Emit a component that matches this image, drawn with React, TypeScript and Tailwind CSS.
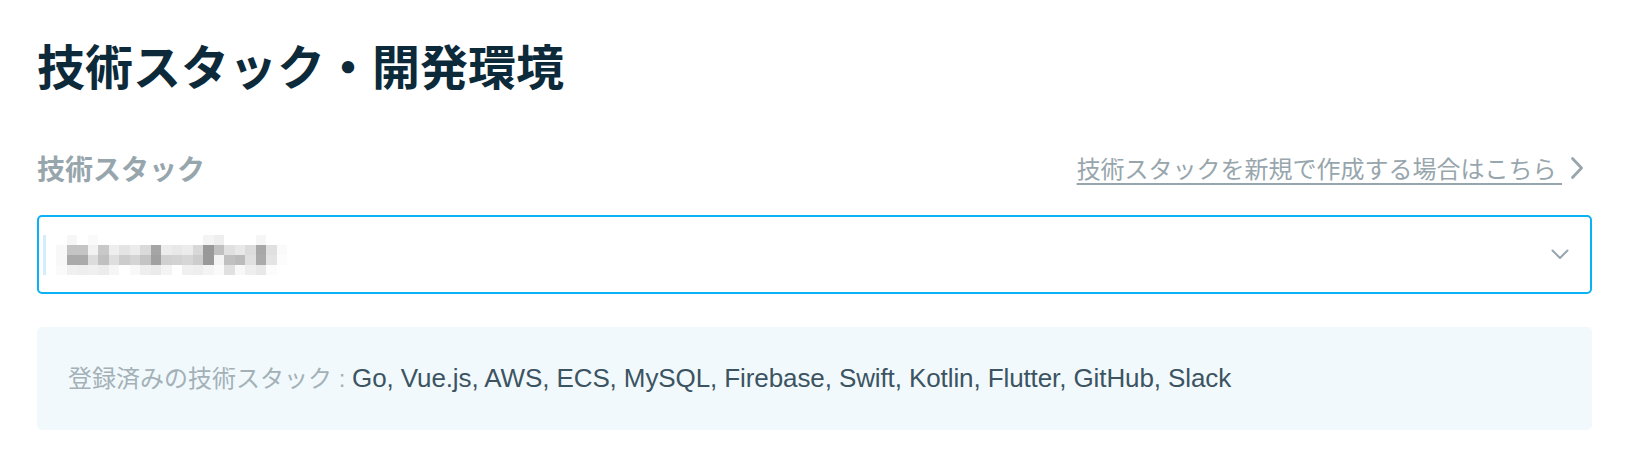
import React from 'react';

const FONT = { fontFamily: '"Liberation Sans", "Noto Sans CJK JP", sans-serif' };

// mosaic that hides the selected value (rows of 11px blocks, greys sampled from the picture)
const MOSAIC: string[][] = [
  ['#fff', '#f6f6f6', '#fff', '#fafafa', '#fff', '#fff', '#fff', '#fff', '#fff', '#fff', '#fff', '#fff', '#fff', '#fff', '#f4f4f4', '#eeeeee', '#fff', '#fff', '#fff', '#f6f6f6', '#fff', '#fff'],
  ['#f8f8f8', '#c4c4c4', '#c4c4c4', '#f2f2f2', '#c8c8c8', '#eeeeee', '#e4e4e4', '#ececec', '#dadada', '#a5a5a5', '#ececec', '#e8e8e8', '#ececec', '#d8d8d8', '#999999', '#c0c0c0', '#e0e0e0', '#e8e8e8', '#dcdcdc', '#a8a8a8', '#e0e0e0', '#fafafa'],
  ['#f8f8f8', '#aaaaaa', '#aaaaaa', '#dcdcdc', '#c0c0c0', '#dedede', '#cccccc', '#d4d4d4', '#c4c4c4', '#a0a0a0', '#d0d0d0', '#d2d2d2', '#d6d6d6', '#cccccc', '#999999', '#f4f4f4', '#c0c0c0', '#bbbbbb', '#e0e0e0', '#aaaaaa', '#e4e4e4', '#fcfcfc'],
  ['#fafafa', '#f0f0f0', '#eeeeee', '#f0f0f0', '#ececec', '#f6f6f6', '#fff', '#f8f8f8', '#eeeeee', '#eaeaea', '#f4f4f4', '#fff', '#f0f0f0', '#eeeeee', '#f4f4f4', '#fafafa', '#e0e0e0', '#f8f8f8', '#eeeeee', '#e8e8e8', '#fcfcfc', '#fff'],
];

const stacks = ['Go', 'Vue.js', 'AWS', 'ECS', 'MySQL', 'Firebase', 'Swift', 'Kotlin', 'Flutter', 'GitHub', 'Slack'];

const Mosaic: React.FC = () => (
  <div className="flex flex-col">
    {MOSAIC.map((row, r) => (
      <div key={r} className="flex">
        {row.map((c, i) => (
          <div key={i} className="h-[10px] w-[10.5px]" style={{ backgroundColor: c }} />
        ))}
      </div>
    ))}
  </div>
);

export default function App() {
  return (
    <div className="min-h-[462px] bg-white pl-[37px] pr-[52px] pt-[28px]" style={FONT}>
      <h1 className="text-[48px] font-bold leading-[72px] text-[#0c2a3a]" style={{ fontFamily: '"Noto Sans CJK JP", sans-serif' }}>
        技術スタック・開発環境
      </h1>

      <div className="mt-[48px] flex h-[40px] items-center justify-between">
        <span className="text-[28px] font-bold text-[#97a6ad]" style={{ fontFamily: '"Noto Sans CJK JP", sans-serif' }}>
          技術スタック
        </span>
        <a href="#" className="mr-[8px] flex items-center gap-[8px] text-[#97a6ad]">
          <span className="text-[24px] underline underline-offset-[5px] decoration-[1.5px]" style={{ fontFamily: '"Noto Sans CJK JP", sans-serif' }}>
            技術スタックを新規で作成する場合はこちら&nbsp;
          </span>
          <svg width="14" height="24" viewBox="0 0 14 24" fill="none" stroke="#97a6ad" strokeWidth="2.8" strokeLinecap="round" strokeLinejoin="round">
            <path d="M2.5 2.5 L11.5 12 L2.5 21.5" />
          </svg>
        </a>
      </div>

      <div className="mt-[27px] flex h-[79px] items-center justify-between rounded-[5px] border-2 border-[#0ab1f5] bg-white pl-[4px] pr-[21px]">
        <div className="flex items-center">
          <div className="h-[40px] w-[3px] bg-[#d3eefa]" />
          <div className="ml-[10px]">
            <Mosaic />
          </div>
        </div>
        <svg width="18" height="11" viewBox="0 0 18 11" fill="none" stroke="#98a6ad" strokeWidth="2" strokeLinecap="round" strokeLinejoin="round">
          <path d="M1.5 1.5 L9 9 L16.5 1.5" />
        </svg>
      </div>

      <div className="mt-[33px] flex h-[103px] items-center rounded-[5px] bg-[#f1f9fd] px-[31px]">
        <p className="whitespace-nowrap">
          <span className="text-[24px] text-[#a3b1b7]">登録済みの技術スタック : </span>
          <span className="text-[26px] tracking-[-0.1px] text-[#3c5461]">{stacks.join(', ')}</span>
        </p>
      </div>
    </div>
  );
}
